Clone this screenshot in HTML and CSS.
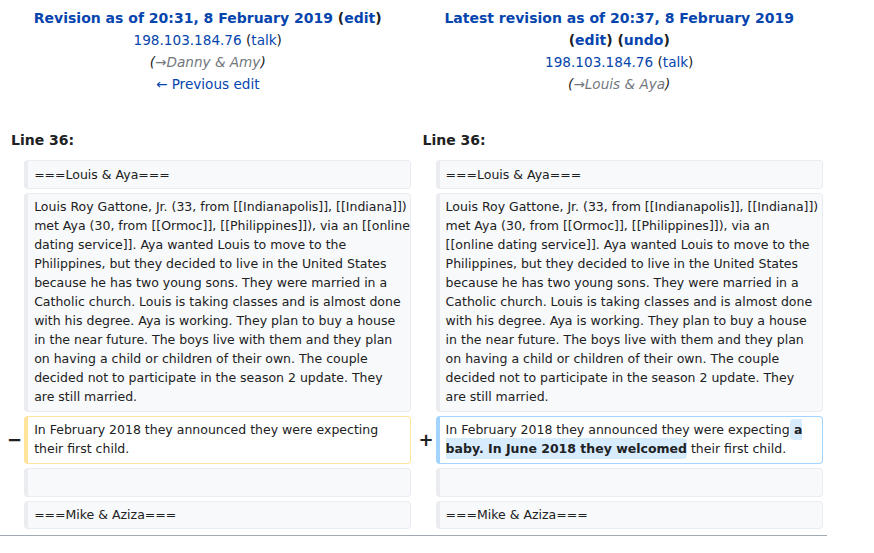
FILE: index.html
```html
<!DOCTYPE html>
<html lang="en">
<head>
<meta charset="utf-8">
<title>Diff</title>
<link rel="stylesheet" href="styles.css">
</head>
<body>
<div class="page">
<table class="diff">
  <colgroup>
    <col class="col-marker"><col class="col-content"><col class="col-marker"><col class="col-content">
  </colgroup>
  <tr class="title-row">
    <td colspan="2" class="diff-title">
      <div class="title-line"><a href="#">Revision as of 20:31, 8 February 2019</a> (<a href="#">edit</a>)</div>
      <div><a href="#">198.103.184.76</a> (<a href="#">talk</a>)</div>
      <div class="comment">(<span class="auto">→Danny &amp; Amy</span>)</div>
      <div><a href="#">← Previous edit</a></div>
    </td>
    <td colspan="2" class="diff-title">
      <div class="title-line"><a href="#">Latest revision as of 20:37, 8 February 2019</a></div>
      <div class="title-line">(<a href="#">edit</a>) (<a href="#">undo</a>)</div>
      <div><a href="#">198.103.184.76</a> (<a href="#">talk</a>)</div>
      <div class="comment">(<span class="auto">→Louis &amp; Aya</span>)</div>
    </td>
  </tr>
  <tr>
    <td colspan="2" class="diff-lineno">Line 36:</td>
    <td colspan="2" class="diff-lineno">Line 36:</td>
  </tr>
  <tr>
    <td class="diff-marker"></td>
    <td class="diff-line context">===Louis &amp; Aya===</td>
    <td class="diff-marker"></td>
    <td class="diff-line context">===Louis &amp; Aya===</td>
  </tr>
  <tr>
    <td class="diff-marker"></td>
    <td class="diff-line context fixed-lines">Louis Roy Gattone, Jr. (33, from [[Indianapolis]], [[Indiana]])<br>met Aya (30, from [[Ormoc]], [[Philippines]]), via an [[online<br>dating service]]. Aya wanted Louis to move to the<br>Philippines, but they decided to live in the United States<br>because he has two young sons. They were married in a<br>Catholic church. Louis is taking classes and is almost done<br>with his degree. Aya is working. They plan to buy a house<br>in the near future. The boys live with them and they plan<br>on having a child or children of their own. The couple<br>decided not to participate in the season 2 update. They<br>are still married.</td>
    <td class="diff-marker"></td>
    <td class="diff-line context fixed-lines">Louis Roy Gattone, Jr. (33, from [[Indianapolis]], [[Indiana]])<br>met Aya (30, from [[Ormoc]], [[Philippines]]), via an<br>[[online dating service]]. Aya wanted Louis to move to the<br>Philippines, but they decided to live in the United States<br>because he has two young sons. They were married in a<br>Catholic church. Louis is taking classes and is almost done<br>with his degree. Aya is working. They plan to buy a house<br>in the near future. The boys live with them and they plan<br>on having a child or children of their own. The couple<br>decided not to participate in the season 2 update. They<br>are still married.</td>
  </tr>
  <tr>
    <td class="diff-marker"><span class="mark">−</span></td>
    <td class="diff-line deleted">In February 2018 they announced they were expecting<br>their first child.</td>
    <td class="diff-marker"><span class="mark">+</span></td>
    <td class="diff-line added">In February 2018 they announced they were expecting<ins class="diffchange"> a<br>baby. In June 2018 they welcomed</ins> their first child.</td>
  </tr>
  <tr>
    <td class="diff-marker"></td>
    <td class="diff-line context">&nbsp;</td>
    <td class="diff-marker"></td>
    <td class="diff-line context">&nbsp;</td>
  </tr>
  <tr>
    <td class="diff-marker"></td>
    <td class="diff-line context">===Mike &amp; Aziza===</td>
    <td class="diff-marker"></td>
    <td class="diff-line context">===Mike &amp; Aziza===</td>
  </tr>
</table>
<div class="rule"></div>
</div>
</body>
</html>
```
FILE: styles.css
```css
html, body {
  margin: 0;
  padding: 0;
  background: #ffffff;
}
body {
  font-family: "DejaVu Sans", sans-serif;
  color: #202122;
}
.page {
  width: 827px;
}
a {
  color: #0645ad;
  text-decoration: none;
}
.diff {
  width: 827px;
  table-layout: fixed;
  border-collapse: separate;
  border-spacing: 4px;
}
.col-marker { width: 2%; }
.col-content { width: 48%; }
.diff-title {
  text-align: center;
  vertical-align: top;
  font-size: 13.6px;
  line-height: 22px;
  padding: 3px 0 0 0;
}
.title-line {
  font-weight: bold;
  font-size: 14px;
}
.comment {
  font-style: italic;
}
.auto {
  color: #72777d;
}
.diff-lineno {
  font-weight: bold;
  font-size: 14px;
  line-height: 22px;
  padding: 30px 7px 5px 7px;
}
.diff-marker {
  text-align: right;
  font-weight: bold;
  font-size: 18px;
  line-height: 1.2;
  vertical-align: middle;
  padding: 0;
}
.mark {
  display: inline-block;
  margin-right: -2px;
}
.diff-line {
  font-size: 12.5px;
  line-height: 19px;
  vertical-align: top;
  white-space: pre-wrap;
  word-wrap: break-word;
  padding: 3.5px 6px 4.4px 6px;
  border-style: solid;
  border-width: 1px 1px 1px 4px;
  border-radius: 4px;
}
.fixed-lines {
  white-space: nowrap;
}
.context {
  background: #f8f9fa;
  border-color: #eaecf0;
}
.deleted {
  background: #ffffff;
  border-color: #ffe49c;
}
.added {
  background: #ffffff;
  border-color: #a3d3ff;
}
.diffchange {
  text-decoration: none;
  font-weight: bold;
  background: #d8ecff;
  border-radius: 4px;
  padding: 3px 0;
}
.rule {
  width: 827px;
  height: 0;
  margin-top: 2px;
  border-top: 1px solid #a2a9b1;
}
```
